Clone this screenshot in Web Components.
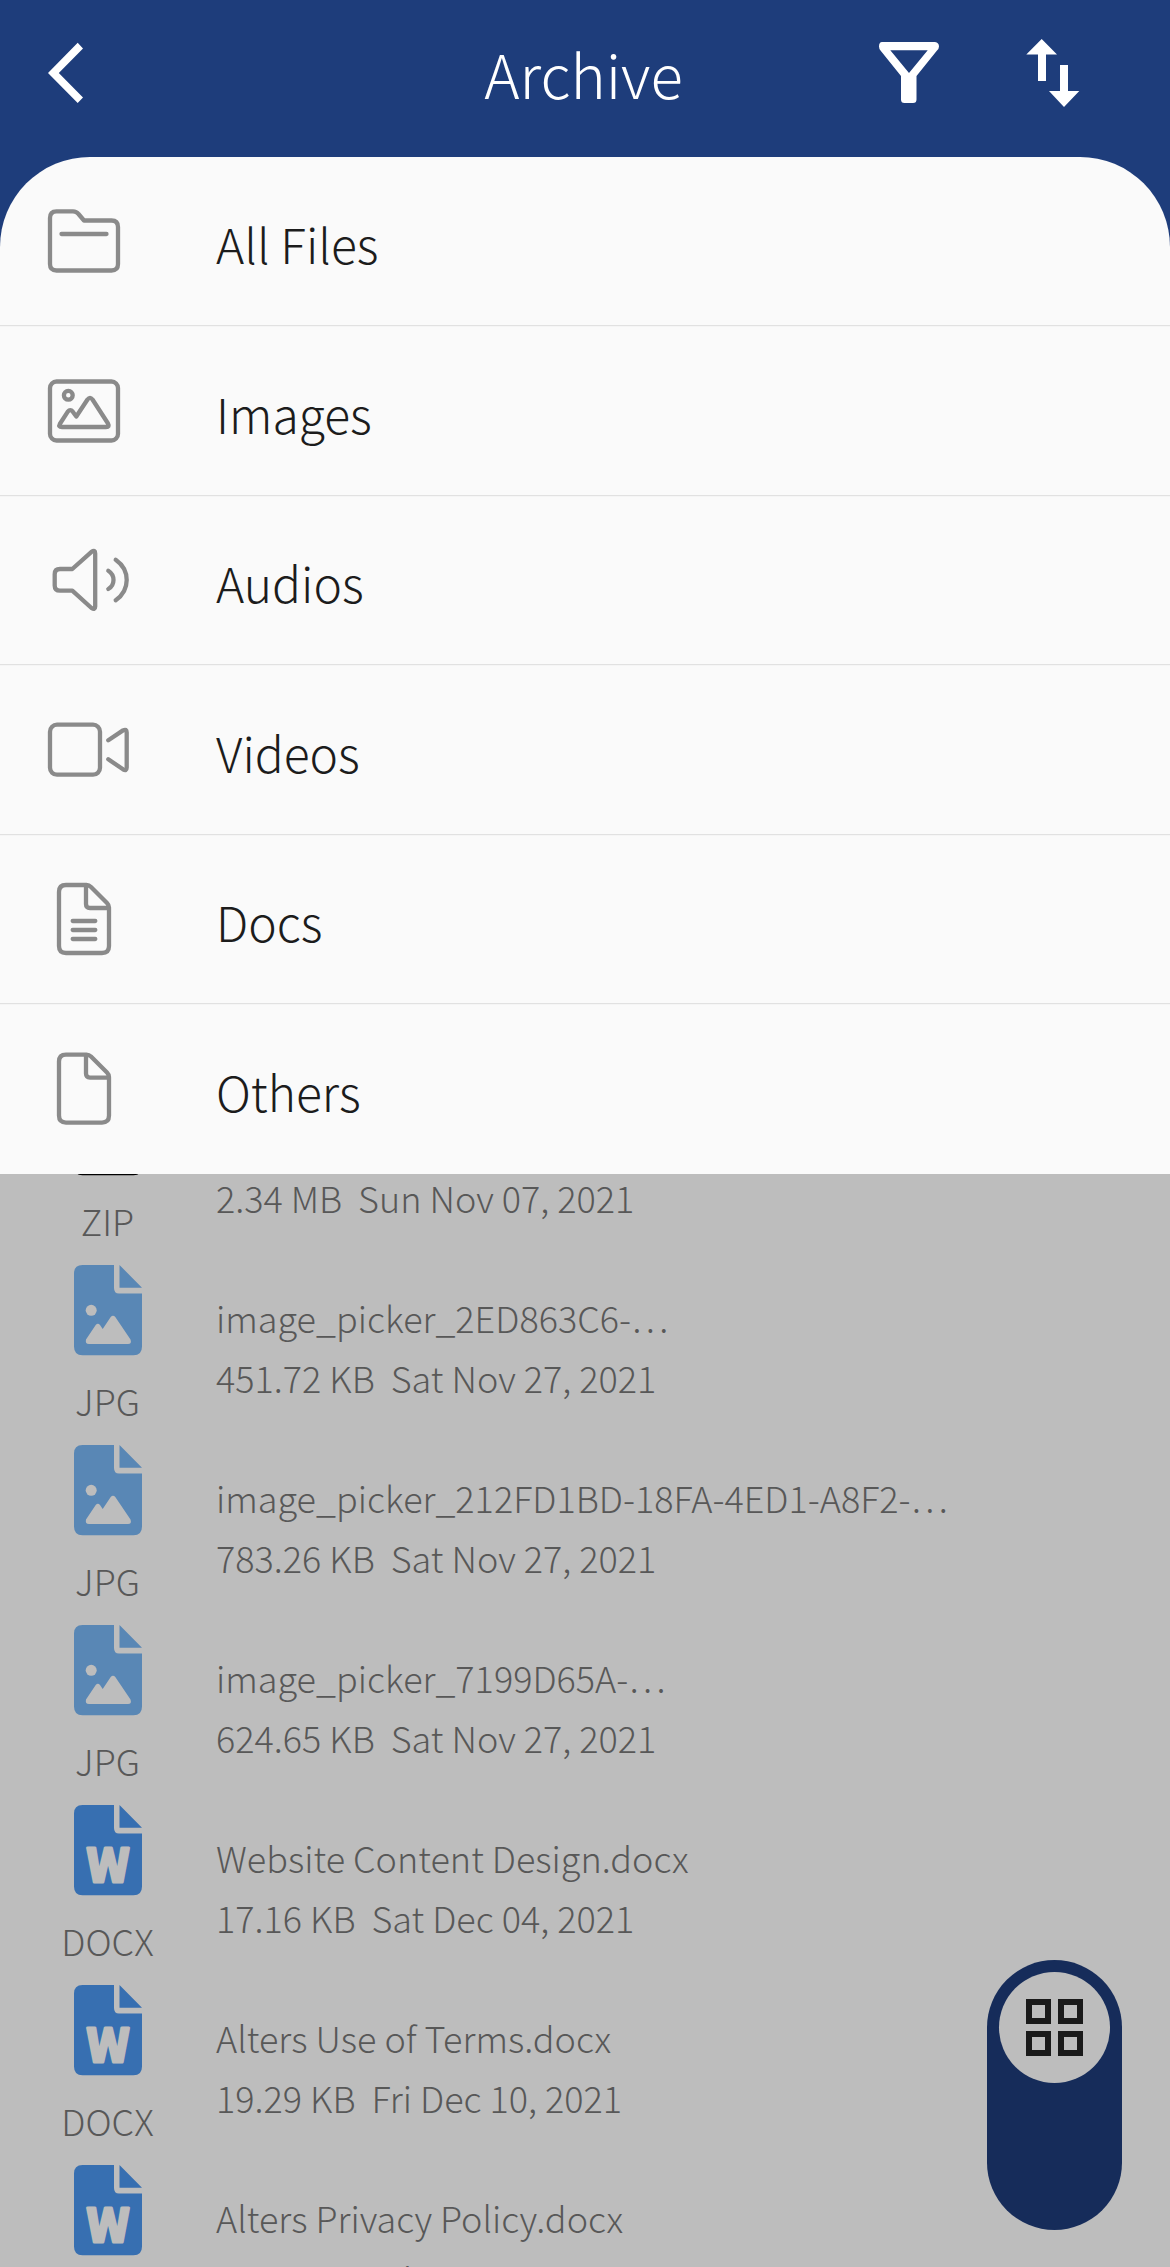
<!DOCTYPE html>
<html lang="en">
<head>
<meta charset="utf-8">
<title>Archive</title>
<style>
html,body{margin:0;height:2267px;overflow:hidden;background:#bdbdbd}
body{font-family:"Noto Sans CJK SC Light","Noto Sans CJK SC","Noto Sans",sans-serif;font-weight:300}
</style>
</head>
<body>
<archive-screen></archive-screen>
<script>
const define = (name, css, html) => customElements.define(name, class extends HTMLElement {
  connectedCallback() {
    if (this.shadowRoot) return;
    const root = this.attachShadow({ mode: 'open' });
    root.innerHTML = '<style>*{box-sizing:border-box}' + css + '</style>' +
      (typeof html === 'function' ? html(this) : html);
  }
});

const menuIcons = {
  folder: '<path d="M8 19Q8 12.3 14.5 12.3H31Q34.5 12.3 36.5 15L42 21.5H69.500Q76 21.5 76 28V65Q76 71.500 69.500 71.500H14.500Q8 71.500 8 65Z"/><path d="M19.500 35H64.500"/>',
  image: '<rect x="8" y="13.500" width="68" height="59" rx="6.500"/><circle cx="26.300" cy="27.300" r="4.400"/><path d="M17.800 56L25.800 43.700Q28.300 40.700 30.800 43.700L34.300 48.500L45.500 31.500Q48 28.200 50.500 31.500L66 55.500Q68 59 64 59H20Q16 59 17.800 56Z"/>',
  audio: '<path d="M30.300 31L49.500 13.800Q53.200 11.500 53.200 15.500V68.500Q53.200 72.500 49.500 70L30.300 52.700H18Q12.700 52.700 12.700 47.500V36.200Q12.700 31 18 31Z"/><path d="M66.300 32.700Q71.500 36 71.500 42T66.300 51M73.700 21.700Q84.700 29.500 84.700 42T73.700 62.300"/>',
  video: '<rect x="8" y="17.700" width="50" height="50" rx="7"/><path d="M66.300 33.300L81 23.400Q84.700 21.500 84.700 25.500V60.500Q84.700 64.500 81 62.300L66.300 52.300"/>',
  doc: '<path d="M24 8H44.500Q47 8 49 10L65 26Q67 28 67 30.500V69Q67 76 60 76H24Q17 76 17 69V15Q17 8 24 8ZM44 8V27Q44 31 48 31H67M30.700 44H53.300M30.700 53H53.300M30.700 62H53.300"/>',
  file: '<path transform="translate(0 .6)" d="M24 8H44.500Q47 8 49 10L65 26Q67 28 67 30.500V69Q67 76 60 76H24Q17 76 17 69V15Q17 8 24 8ZM44 8V27Q44 31 48 31H67"/>'
};

define('app-bar',
  `:host{display:grid;grid-template-columns:1fr auto 1fr;height:247px;background:#1e3d7b;color:#fff}
   .start,.end{display:flex;height:157px}.start{padding:42px 0 0 48px}
   .end{justify-content:flex-end;padding:36px 88px 0 0;gap:85px}
   h1{margin:0;font-size:60px;font-weight:inherit;line-height:81px;padding:32px 3px 0 0}
   svg{display:block;fill:currentColor}`,
  `<div class="start"><svg width="36" height="62"><path d="M29.700 .8L35 6.500L10.800 31L35 55.500L29.700 61L0 31Z"/></svg></div>
   <h1><slot></slot></h1>
   <div class="end"><svg width="62" height="72"><path transform="translate(0 -.4)" fill-rule="evenodd" d="M4 6.500H57Q61 7 61 11Q61 13 59 15L38.500 40.500V64Q38.500 67.500 35 67.500H26.500Q23 67.500 23 64V40.500L2.500 15Q1 13 1 11Q1 6.500 4 6.500ZM12.300 14.700L31 37.500L49.700 14.700Z"/></svg>
   <svg width="57" height="72"><path d="M16.700 3L32 18.500H21V45H13V18.500H1.300ZM35 29H43V55H54.300L39 71L24 55H35Z"/></svg></div>`);

define('menu-item',
  `:host{display:flex;align-items:flex-start;height:169px;padding-left:42px;border-bottom:1px solid #e1e1e1;box-shadow:0 1px 0 #f5f5f5;color:#1c1c1c;font-size:48px;box-sizing:border-box}
   :host(:nth-child(even)){height:170px}:host(:last-child){border-bottom:0}
   svg{flex:none;width:96px;height:84px;margin:42px 78px 0 0;fill:none;stroke:#8a8a8a;stroke-width:4.300;stroke-linecap:round;stroke-linejoin:round}
   span{line-height:70px;padding-top:51px}
   :host(:nth-child(even)) span{padding-top:52px}`,
  el => `<svg viewBox="0 0 96 84">${menuIcons[el.getAttribute('icon')]}</svg><span><slot></slot></span>`);

define('filter-menu',
  `:host{display:block;position:absolute;left:0;top:157px;width:100%;height:1017px;background:#fafafa;border-radius:90px 90px 0 0;overflow:hidden}`,
  `<slot></slot>`);

const glyphs = {
  ZIP: '',
  JPG: '<circle cx="17.200" cy="45.300" r="5.500" fill="#bdbdbd"/><path fill="#bdbdbd" d="M12 74.500L21.700 60Q23.900 57.500 26 60L28.700 64L36.700 52Q39 49.300 41.300 52L56.500 74.500Q58 79 54 79H15Q11 79 12 74.500Z"/>',
  DOCX: '<text x="34" y="77.400" text-anchor="middle" textLength="42.500" lengthAdjust="spacingAndGlyphs" font-size="46" font-family="Noto Sans CJK SC" font-weight="700" fill="#bdbdbd" stroke="#bdbdbd" stroke-width="3.200" stroke-linejoin="round">W</text>'
};
const tints = { ZIP: '#000', JPG: '#5987b5', DOCX: '#376fb1' };

define('file-row',
  `:host{display:grid;grid-template-columns:216px 1fr;height:180px;color:#585858;font-size:36px;line-height:60px}
   .type{display:flex;flex-direction:column;align-items:center;width:215px}
   svg{display:block;width:68px;height:91px;flex:none}
   .type span{margin-top:14px;height:60px}
   .text{display:flex;flex-direction:column;padding-top:22px}
   .text>*{height:60px;white-space:pre}`,
  el => { const t = el.getAttribute('type'); return `<div class="type"><svg viewBox="0 0 68 91"><path fill="${tints[t]}" d="M8.500 0H40V23Q40 28.500 45 28.500H68V81.500Q68 90.300 59.500 90.300H8.500Q0 90.300 0 81.500V8.500Q0 0 8.500 0ZM45.500 0L68 22.700H45.500Z"/>${glyphs[t]}</svg><span>${t}</span></div>
   <div class="text"><div class="name"><slot></slot></div><div class="meta">${el.getAttribute('meta')}</div></div>`; });

define('view-toggle',
  `:host{display:flex;justify-content:center;align-items:flex-start;position:absolute;left:987px;top:1960px;width:135px;height:270px;border-radius:67.500px;background:#162c5a;padding-top:12px;box-sizing:border-box}
   .knob{width:111px;height:111px;border-radius:50%;background:#bdbdbd;display:grid;grid-template-columns:25px 25px;gap:6.300px;place-content:center}
   i{width:25px;height:25px;border:6px solid #1a1a1a}`,
  `<div class="knob"><i></i><i></i><i></i><i></i></div>`);

define('archive-screen',
  `:host{display:block;position:relative;width:1170px;height:2267px;overflow:hidden;background:#bdbdbd}
   .files{padding-top:838px}`,
  `<app-bar>Archive</app-bar>
   <div class="files">
   <file-row type="ZIP" meta="2.34 MB  Sun Nov 07, 2021"></file-row>
   <file-row type="JPG" meta="451.72 KB  Sat Nov 27, 2021">image_picker_2ED863C6-…</file-row>
   <file-row type="JPG" meta="783.26 KB  Sat Nov 27, 2021">image_picker_212FD1BD-18FA-4ED1-A8F2-…</file-row>
   <file-row type="JPG" meta="624.65 KB  Sat Nov 27, 2021">image_picker_7199D65A-…</file-row>
   <file-row type="DOCX" meta="17.16 KB  Sat Dec 04, 2021">Website Content Design.docx</file-row>
   <file-row type="DOCX" meta="19.29 KB  Fri Dec 10, 2021">Alters Use of Terms.docx</file-row>
   <file-row type="DOCX" meta="15.78 KB  Fri Dec 10, 2021">Alters Privacy Policy.docx</file-row>
   </div>
   <filter-menu>
   <menu-item icon="folder">All Files</menu-item><menu-item icon="image">Images</menu-item><menu-item icon="audio">Audios</menu-item><menu-item icon="video">Videos</menu-item><menu-item icon="doc">Docs</menu-item><menu-item icon="file">Others</menu-item>
   </filter-menu>
   <view-toggle></view-toggle>`);
</script>
</body>
</html>
